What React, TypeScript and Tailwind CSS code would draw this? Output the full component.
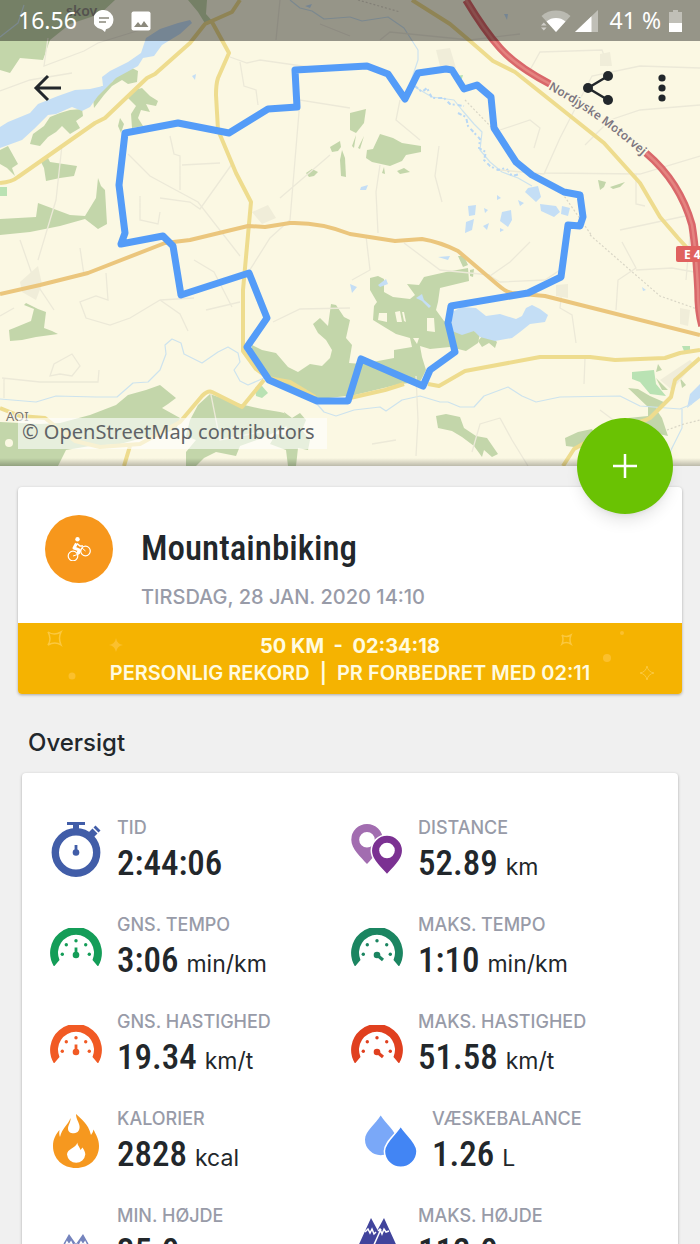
import React from 'react';

type StatProps = {
  icon: React.ReactNode;
  label: string;
  value: string;
  unit?: string;
  indent?: boolean;
};

const MapCanvas = () => (
  <svg
    className="block h-full w-full"
    viewBox="0 0 700 466"
    preserveAspectRatio="xMidYMid slice"
    role="img"
    aria-label="Rutekort"
  >
    <rect width="700" height="466" fill="#fbf8e3" />

    {/* forests */}
    <g fill="#c3d6aa">
      <path d="M0 0H50L50 40L43 60L20 58L10 73L0 70Z" />
      <path d="M45 0H115L100 14L70 24L50 40Z" />
      <path d="M188 0H207L206 14L213 22L206 25L198 12Z" />
      <path d="M93 98L98 88L112 82L116 76L124 72L132 68L138 71L137 82L128 84L122 80L112 86L104 95L94 108Z" />
      <path d="M33 134L44 126L50 117L60 113L70 110L82 109L83 116L76 121L80 128L70 134L62 126L56 132L48 137L40 146L30 144Z" />
      <path d="M128 98L134 90L142 88L150 96L158 101L156 106L146 104L150 112L141 110L138 118L143 126L132 128L131 114L136 106Z" />
      <path d="M120 118L124 124L121 133L118 126Z" />
      <path d="M0 150L8 146L18 164L12 168L15 176L7 168L0 164Z" />
      <path d="M40 160L48 158L50 162L77 166L74 176L60 178L46 181L44 168Z" />
      <path d="M98 178L101 186L105 190L107 224L98 229L85 219L60 226L30 232L0 235V219L36 217L38 203L70 215L85 216L96 198Z" />
      <path d="M330 147L340 141L341 147L338 151L332 152Z" />
      <path d="M342 150L345 158L346 177L341 176L340 160Z" />
      <path d="M306 173L312 169L318 172L314 176L309 177Z" />
      <path d="M350 113L366 109L364 123L356 133L350 130Z" />
      <path d="M380 134L393 138L402 143L421 146L421 152L406 155L402 161L390 166L372 162L366 158L367 150L373 149Z" />
      <path d="M352 146L356 135L354 148ZM358 148L364 136L360 149Z" />
      <path d="M397 171L404 168L410 172L400 174ZM384 167L385 174L382 173Z" />
      <path d="M598 180L606 182L604 187L600 190ZM610 187L625 182L620 187L613 189Z" />
      <path d="M9 330L14 328L31 321L34 309L24 305L26 303L38 309L46 312L44 328L52 331L58 334L36 337L22 340L10 341Z" />
      <path d="M370 278L378 276L384 279L384 292L393 297L410 299L415 295L407 284L419 285L424 277L446 272L468 268L469 281L440 288L438 302L436 310L444 321L470 329L480 334L478 343L466 351L450 347L430 349L420 346L422 357L426 370L420 382L400 384L355 395L320 399L270 381L252 359L252 345L262 350L276 353L288 367L298 372L310 364L322 366L330 358L332 350L326 340L318 333L313 324L320 318L328 326L331 304L336 305L344 317L350 320L346 338L352 345L349 363L362 364L394 358L394 350L412 347L410 338L396 334L386 328L373 320L374 306L377 302L370 290Z" />
      <path d="M458 256L464 256L468 265L463 267ZM470 270L474 269L473 277L470 276Z" />
      <path d="M483 335L492 337L497 342L495 348L489 343L482 347L478 341Z" />
      <path d="M0 422L40 424L60 423L90 415L116 405L128 395L146 390L160 385L176 398L168 404L162 408L180 418L176 430L150 436L120 444L90 446L66 450L58 466H0Z" />
      <path d="M198 405L210 394L224 399L240 404L262 409L280 412L284 413L290 424L280 430L262 438L240 446L236 456L216 452L204 458L196 466H186V452L196 440L186 436L190 420Z" />
      <path d="M284 412L292 418L300 413L306 420L302 430L310 440L308 450L298 448L296 466H288L286 450L270 444L276 434L288 436Z" />
      <path d="M436 416L446 414L460 417L464 428L476 436L487 438L498 454L492 457L484 450L482 457L474 446L462 437L452 431L438 428Z" />
      <path d="M565 438L578 432L592 429L596 436L582 448L566 446Z" />
      <path d="M628 388L638 389L650 396L666 403L656 409L662 418L668 436L640 430L628 418L648 416L648 407Z" />
      <path d="M658 364L662 370L656 372ZM656 378L668 390L662 390ZM680 378L686 385L682 388Z" />
    </g>
    <g fill="#b9e2b3">
      <path d="M632 372L654 370L656 384L666 396L650 394L640 382L632 379Z" />
      <path d="M682 346H690V352L684 351ZM0 187H7V196H0ZM456 76L463 75L461 82Z" />
      <path d="M255 388L262 386L268 393L262 398L256 396Z" />
    </g>
    <g fill="#fbf8e3">
      <path d="M379 313H387V322L378 320ZM395 312L400 311L402 322H397ZM402 312H404L406 322L404 321ZM427 318L434 318L435 332L427 331ZM413 338H419L417 344Z" />
      <circle cx="9" cy="443" r="4" />
    </g>

    {/* lakes, ponds and streams */}
    <g fill="#c4def5">
      <path d="M0 127L8 122L30 113L38 104L58 96L75 90L90 89L103 86L102 77L110 71L128 62L141 53L146 38L160 29L178 23L190 20L192 23L180 34L162 45L154 56L143 58L138 66L116 78L98 96L90 107L82 111L72 107L56 114L48 115L34 129L22 140L0 148Z" />
      <path d="M452 312L462 307L476 308L486 316L500 314L516 319L522 316L526 308L532 305L540 309L548 315L545 322L530 324L520 332L512 338L495 341L480 337L474 331L462 335L452 331Z" />
      <path d="M528 188L538 186L541 197L536 202L525 192ZM540 204L556 206L560 212L554 217L541 211ZM562 206L570 208L568 216L561 214ZM502 212L511 210L512 220L508 227L500 221ZM518 200L524 203L520 206ZM468 206L476 205L475 215L469 216ZM466 222L474 219L472 230L465 233ZM484 208L488 210L485 213ZM497 195L501 198L497 200ZM483 226L489 223L487 230ZM500 228L504 230L500 232Z" />
      <path d="M416 298L422 294L424 300L431 306L429 308L422 301ZM378 285L386 279L388 284L380 287ZM361 187L368 185L366 190H360ZM192 76L196 74L195 80ZM700 384L690 394L687 408L700 398ZM438 257L450 256L448 260Z" />
      <path d="M305 6L312 4L310 8ZM350 284L357 287L352 293ZM504 14L508 14L507 20ZM642 287L646 290L643 291Z" />
    </g>
    <g fill="none" stroke="#cde3ee" strokeWidth="1.2" strokeLinejoin="round">
      <path d="M0 399L36 402L56 396L96 397L117 397L133 383L148 382L160 370L166 354L165 345L172 339L181 343L184 354L202 363L218 352L228 347L238 353L240 362L234 370L240 381L248 385L264 378" />
      <path d="M317 404L324 412L336 416L354 410L380 407L386 411L402 400L420 396L440 402L448 402L460 407L474 407L484 396L508 387L522 396L536 402L560 397L620 396L640 406L680 409L692 404" />
      <path d="M682 409L682 428L671 450L668 466M350 17L362 21L388 17L404 28L418 50L418 60L410 84L420 90L432 97L454 100L462 110L474 124L482 132L480 150L490 162L502 172L518 178L532 186" />
      <path d="M290 0L300 8L312 11L324 19L350 17M0 37L18 23L24 5" />
    </g>
    <path
      d="M415 86L422 92L427 88L432 98L444 98L450 104L464 106M458 113L466 117L468 126L480 139L479 148L486 152L484 160L490 166L498 170L506 168L512 176L520 174"
      fill="none"
      stroke="#b9d8f5"
      strokeWidth="2"
      strokeDasharray="4 2 2 3"
    />

    {/* minor roads */}
    <g fill="none" stroke="#ece9d8" strokeWidth="1.3">
      <path d="M0 91L30 80L72 73M48 38L44 66L84 51L98 43L140 30M230 57L247 63L260 60L309 67M240 62L244 86L256 90L258 105M128 154L150 176L172 188L198 202L240 256M170 136L174 154L180 156L180 190M182 165L220 163M246 276L270 238L290 220L300 100L350 108M280 198L330 155M380 165L376 192L378 233M400 100L396 120L420 140M439 146L435 176L442 202M62 145L56 200L38 260" />
      <path d="M500 170L544 174L560 138L592 76L640 66L700 68M545 173L640 174L700 156M585 145L610 120L640 110L700 105M608 66L602 50L540 52L530 70M636 174L636 204L645 206M620 230L690 215M380 40L390 32L470 40L520 34M500 130L530 120L540 128L534 148M160 198L190 202L200 209L232 164M140 196L140 220L158 224L160 212" />
      <path d="M280 0L276 40M320 24L350 36M20 240L34 280L54 310M80 248L84 275M106 273L108 300L96 296L80 302L86 318L110 325L130 318L160 300L180 314L188 331M160 300L194 298M206 310L240 302M194 260L214 272L232 307M273 322L300 309L350 308M0 316L14 308M50 376L54 364L72 354L80 366L72 376L60 374ZM2 378L40 382L98 382L99 370M4 378V398" />
      <path d="M366 236L370 270L352 280M404 243L440 270L490 275M530 242L510 262L490 276L500 282L545 280L560 270M562 290L560 308L572 315L576 343M622 242L636 268L618 280L616 310M636 270L672 268L700 273M585 358L584 384M500 418L480 424L472 452M500 418L512 440L528 466M416 376L418 420L416 456M372 444L396 440M600 410L640 440M690 235L686 280M210 390L220 440L270 430" />
    </g>
    <path
      d="M590 235L630 270L660 296L700 310M667 430L684 424L700 420M358 0L400 12M465 100L494 130M560 190L592 236"
      fill="none"
      stroke="#d9d6c6"
      strokeWidth="1.2"
      strokeDasharray="2 2"
    />
    <g fill="#f0edd9">
      <path d="M20 282L38 266L42 284L36 300L22 292ZM252 212L268 205L276 218L262 224ZM436 50L450 48L456 68L440 66ZM600 54L610 52L612 66L600 66ZM556 285L568 284L568 298L556 296ZM680 308L690 310L688 326L680 324ZM660 380L690 360L694 364L672 390Z" />
    </g>

    {/* secondary roads */}
    <g fill="none" stroke="#eedc8e" strokeWidth="4" strokeLinejoin="round">
      <path d="M0 183Q12 182 18 177L95 123L105 118L147 78L155 74L190 43L205 24L232 12L240 0" />
      <path d="M212 22L229 53L218 78Q216 84 216 95L218 130L236 173L251 202L248 235L243 290V351L256 369L268 378L290 382L315 397" />
      <path d="M412 0L450 24L470 41L493 61L515 72L604 143L640 183L660 217L678 238L690 251" />
      <path d="M350 398L385 390L404 384M428 384L439 386L465 371L540 357H590L615 360L665 358L680 353L700 350" />
      <path d="M700 358L675 380L671 397L650 418Q640 424 618 423M590 440L574 449L563 466" />
      <path d="M0 408L20 416L45 418L60 430L75 441L100 447L140 444L180 422L202 396Q208 390 212 392L242 407L264 380M130 446L124 466" />
    </g>
    <g fill="none" strokeLinejoin="round">
      <path
        d="M0 294L40 285L88 273L165 243L190 240L248 226L265 227L290 223Q320 222 350 234L395 241L422 239Q440 242 458 251L498 285Q506 292 512 293L545 296L700 335"
        stroke="#ebc67d"
        strokeWidth="4"
      />
      <path d="M466 0Q484 30 500 48T550 84M646 153Q680 182 692 225Q696 250 698 290Q698 312 702 326" stroke="#d9676a" strokeWidth="7.5" />
      <path d="M466 0Q484 30 500 48T550 84M646 153Q680 182 692 225Q696 250 698 290Q698 312 702 326" stroke="#e48480" strokeWidth="2.5" />
    </g>

    {/* map labels */}
    <path id="motorway" d="M548 89Q602 118 656 168" fill="none" />
    <text
      className="font-['Noto_Sans','Open_Sans',sans-serif] text-[12px] font-semibold"
      fill="#7d7680"
      stroke="#fbf8e3"
      strokeWidth="3"
      paintOrder="stroke"
    >
      <textPath href="#motorway">Nordjyske Motorvej</textPath>
    </text>
    <rect x="676" y="246" width="30" height="16" rx="2" fill="#e0615f" />
    <g className="font-['Noto_Sans','Open_Sans',sans-serif]">
      <text x="684" y="259" className="text-[12px] font-bold" fill="#fff">
        E 45
      </text>
      <text x="66" y="16" className="text-[14px] font-semibold" fill="#8d8984">
        skov
      </text>
      <text x="6" y="421" className="text-[13px]" fill="#77736f" stroke="#fbf8e3" strokeWidth="2" paintOrder="stroke">
        AOI
      </text>
    </g>

    {/* recorded track */}
    <path
      d="M125 133L178 123L229 133L268 109L297 107L295 70L367 66L388 74L405 99L418 73L446 69L452 70L464 89L477 85L491 97L494 128L516 162L532 175L564 192L580 195L583 217L580 226L568 225L561 277L528 293L451 306L448 323L455 352L430 370L423 386L361 359L348 401H317L269 380L247 347L267 318L249 273L181 295L173 246L163 236L121 244L125 233L119 185Z"
      fill="none"
      stroke="#549cf8"
      strokeWidth="7"
      strokeLinejoin="round"
    />
  </svg>
);

const StatusBar = () => (
  <div className="flex h-[41px] items-center justify-between bg-black/40 px-[18px] font-['Noto_Sans','Open_Sans',sans-serif] text-[23px] text-white">
    <div className="flex items-center gap-[17px]">
      <span>16.56</span>
      <svg className="h-[22px] w-5" viewBox="0 0 20 22" aria-hidden="true">
        <path d="M10 0a9.8 9.8 0 0 1 2 19.3L11 22l-3-2.5A9.8 9.8 0 0 1 10 0z" fill="#fff" />
        <path d="M5 8h10M5 12h7" stroke="#8b897c" strokeWidth="1.6" />
      </svg>
      <svg className="h-5 w-5" viewBox="0 0 20 20" aria-hidden="true">
        <rect x="0.5" y="0.5" width="19" height="19" rx="2" fill="#fff" />
        <path d="M3 16l4-5 3 3.5 3-4.5 4.5 6z" fill="#8b897c" />
      </svg>
    </div>
    <div className="flex items-center gap-1">
      <svg className="h-[22px] w-[30px]" viewBox="0 0 30 22" aria-hidden="true">
        <path d="M0.5 6a22 22 0 0 1 29 0L15 22z" fill="#fff" opacity="0.35" />
        <path d="M5.5 11.5a15 15 0 0 1 19 0L15 22z" fill="#fff" />
        <path d="M0 15.5l2.8-3 2.8 3zM0 17.5l2.8 3 2.8-3z" fill="#cfcec8" />
      </svg>
      <svg className="h-[22px] w-[23px]" viewBox="0 0 23 22" aria-hidden="true">
        <path d="M23 0v22H0z" fill="#fff" opacity="0.4" />
        <path d="M16.5 6.2V22H0z" fill="#fff" />
      </svg>
      <span className="pl-2">41 %</span>
      <svg className="ml-1 h-[22px] w-[13px]" viewBox="0 0 13 22" aria-hidden="true">
        <path d="M4 0h5v2h4v20H0V2h4z" fill="#fff" opacity="0.4" />
        <path d="M0 13h13v9H0z" fill="#fff" />
      </svg>
    </div>
  </div>
);

const AppBar = () => (
  <div className="flex items-center justify-between pt-[23px] pr-[22px] pl-[33px] text-[#22272b]">
    <button type="button" aria-label="Tilbage" className="flex h-12 w-8 items-center">
      <svg className="h-7 w-[30px]" viewBox="0 0 30 28" fill="none" stroke="currentColor" strokeWidth="3">
        <path d="M28 14H4M15 2L3 14l12 12" />
      </svg>
    </button>
    <div className="flex items-center gap-8">
      <button type="button" aria-label="Del" className="flex h-12 w-8 items-center">
        <svg className="h-[34px] w-8" viewBox="0 0 32 34" fill="currentColor">
          <path d="M26 5L6 17l20 12" fill="none" stroke="currentColor" strokeWidth="2.5" />
          <circle cx="26" cy="5" r="5" />
          <circle cx="6" cy="17" r="5" />
          <circle cx="26" cy="29" r="5" />
        </svg>
      </button>
      <button type="button" aria-label="Flere valg" className="flex h-12 w-8 items-center justify-center">
        <svg className="h-7 w-2" viewBox="0 0 8 28" fill="currentColor">
          <circle cx="4" cy="4" r="3.6" />
          <circle cx="4" cy="14" r="3.6" />
          <circle cx="4" cy="24" r="3.6" />
        </svg>
      </button>
    </div>
  </div>
);

const BikeIcon = () => (
  <svg className="h-6 w-6" viewBox="0 0 24 24" fill="none" stroke="#fff" aria-hidden="true">
    <circle cx="6" cy="19" r="4.8" strokeWidth="1.2" />
    <circle cx="18.5" cy="14" r="4.8" strokeWidth="1.2" />
    <circle cx="10.5" cy="2.2" r="2.2" fill="#fff" stroke="none" />
    <path d="M9.5 6.5L7 11l5 1.8-1 4" strokeWidth="3" strokeLinejoin="round" />
    <path d="M10 6.5l3 2.5h3" strokeWidth="1.6" />
    <path d="M6 19l6-2 3-6 3.5 3" strokeWidth="1" />
  </svg>
);

const StopwatchIcon = () => (
  <svg className="h-14 w-[52px]" viewBox="0 0 52 56" fill="#415da8" aria-hidden="true">
    <circle cx="26" cy="30.5" r="20.7" fill="none" stroke="#415da8" strokeWidth="7.4" />
    <path d="M17 0h18v3h-6v5h-6V3h-6z" />
    <path d="M38.5 10.5l4-4 5 5-4 4z" />
    <path d="M43.5 5.5l2-2 5 5-2 2z" />
    <path d="M24.6 23h2.8v5h-2.8z" />
    <circle cx="26" cy="30.5" r="3.3" />
  </svg>
);

const PinsIcon = () => (
  <svg className="h-14 w-[52px]" viewBox="0 0 52 56" fillRule="evenodd" aria-hidden="true">
    <path
      d="M16 2a15.7 15.7 0 0 1 15.7 15.7C31.7 27 22 35 16 42 10 35 .3 27 .3 17.7A15.7 15.7 0 0 1 16 2zm0 8a7.8 7.8 0 1 0 0 15.6A7.8 7.8 0 0 0 16 10z"
      fill="#a26db0"
    />
    <path
      d="M36 13a15.7 15.7 0 0 1 15.7 15.7C51.7 38 42 46 36 53 30 46 20.3 38 20.3 28.7A15.7 15.7 0 0 1 36 13z"
      fill="#7b3192"
      stroke="#fff"
      strokeWidth="1.5"
    />
    <circle cx="36" cy="28.5" r="7.8" fill="#fff" />
  </svg>
);

const GaugeIcon = ({ color, max = false }: { color: string; max?: boolean }) => (
  <svg className="h-[38px] w-[52px]" viewBox="0 0 52 38" fill={color} aria-hidden="true">
    <path d="M4 38.5A25.9 25.9 0 1 1 48 38.5L42.5 32A18 18 0 1 0 9.5 32Z" />
    <circle cx="12.3" cy="26.3" r="1.7" />
    <circle cx="16.3" cy="16.7" r="1.7" />
    <circle cx="26" cy="12.7" r="1.7" />
    <circle cx="35.7" cy="16.7" r="1.7" />
    <circle cx="39.3" cy="26.3" r="1.7" />
    <circle cx="26" cy="27" r="3.3" />
    {max ? (
      <path d="M26 27L32 32" stroke={color} strokeWidth="3.2" />
    ) : (
      <path d="M26 27V19.5" stroke={color} strokeWidth="2.8" />
    )}
  </svg>
);

const FlameIcon = () => (
  <svg className="h-14 w-[52px]" viewBox="0 0 52 56" aria-hidden="true">
    <path
      d="M26 1C31 6 38 10 41 22C42 20.500 43 19 43.500 16.500C46 22 49 26 49 33C49 46 39 55 26 55S3 46 3 33C3 26 6 21 9.500 17C9 20 9.300 22 10 24C12 15 18 12 20.500 5C21 9 18 12 18 15.500C18 19 21 20.500 24 20.300C28 20 30 17 29.500 13C29 9 26 6 26 1z"
      fill="#f6981f"
    />
    <path d="M27.5 29.5C27 32 30 34 30.5 37L32.5 34.5C34 37 35.3 39 35.3 41.5A9.2 9.2 0 0 1 17 41.5C17 36 26 35 27.5 29.5z" fill="#fff" />
  </svg>
);

const DropsIcon = () => (
  <svg className="h-[52px] w-[52px]" viewBox="0 0 52 52" aria-hidden="true">
    <path d="M15.7.5C20 8 31.4 16 31.4 24.5a15.7 15.7 0 0 1-31.4 0C0 16 11.4 8 15.7.5z" fill="#7aa8f8" />
    <path d="M35.7 11C40 19 52 27 52 36a16.3 16.3 0 0 1-32.6 0C19.4 27 31.4 19 35.7 11z" fill="#4285f4" stroke="#fff" strokeWidth="1.5" />
  </svg>
);

const PeaksIcon = ({ color, low = false }: { color: string; low?: boolean }) => (
  <svg className="h-14 w-[52px]" viewBox="0 0 52 56" aria-hidden="true">
    {low ? (
      <>
        <path d="M19 24L26 34L33 24L50 54H2z" fill={color} />
        <path d="M13 34l2 2 2-4 2 3 2-3 2 4 2-2M27 34l2 2 2-4 2 3 2-3 2 4 2-2" fill="none" stroke="#fff" strokeWidth="1.5" />
      </>
    ) : (
      <>
        <path d="M20 8L26.5 20L33 8L54 54H-1z" fill={color} />
        <path d="M14 22l3-3 2 4 2-4 2 5 2-2M27 21l2-2 2 5 2-5 2 3 3-1M22 37l8-18" fill="none" stroke="#fff" strokeWidth="1.5" />
      </>
    )}
  </svg>
);

const Stat = ({ icon, label, value, unit, indent }: StatProps) => (
  <div className={indent ? 'flex items-center gap-[15px] pl-3.5' : 'flex items-center gap-[15px]'}>
    {icon}
    <dl className="whitespace-nowrap">
      <dt className="text-lg leading-7 font-medium text-[#989ba8]">{label}</dt>
      <dd className="flex h-11 items-baseline gap-2 text-[23px] leading-[44px]">
        <span className="font-['Roboto_Condensed',Roboto,sans-serif] text-[35px] leading-[44px] font-medium">
          {value}
        </span>
        {unit && <span>{unit}</span>}
      </dd>
    </dl>
  </div>
);

const Confetti = () => (
  <svg
    className="absolute inset-0 h-full w-full"
    viewBox="0 0 664 71"
    preserveAspectRatio="none"
    fill="#fbc02d"
    aria-hidden="true"
  >
    <path
      d="M30 9q6 4 13 0q-3 6 0 13q-6-4-13 0q4-6 0-13zM544 12q4 3 9 0q-2 5 0 9q-5-3-9 0q2-5 0-9z"
      fill="none"
      stroke="#fbc83f"
      strokeWidth="1.5"
    />
    <path d="M98 15q1 6 7 7q-6 1-7 7q-1-6-7-7q6-1 7-7z" />
    <path d="M629 43q1 6 7 7q-6 1-7 7q-1-6-7-7q6-1 7-7z" fill="none" stroke="#fbc83f" />
    <circle cx="54" cy="53" r="3.5" />
    <circle cx="589" cy="35" r="4" />
    <circle cx="604" cy="10" r="2" />
  </svg>
);

export default function App() {
  return (
    <div className="h-screen overflow-hidden bg-[#f0f0f0] font-['Inter','Liberation_Sans',sans-serif] text-[#22272b]">
      <header className="relative h-[466px]">
        <MapCanvas />
        <div className="absolute inset-x-0 bottom-0 h-2 bg-linear-to-t from-black/25 to-transparent" />
        <div className="absolute inset-x-0 top-0">
          <StatusBar />
          <AppBar />
        </div>
        <a
          href="#copyright"
          className="absolute bottom-[17px] left-[18px] bg-white/60 pr-3 pb-1 pl-1 font-['Noto_Sans','Open_Sans',sans-serif] text-xl leading-[27px] text-[#5f6366]"
        >
          © OpenStreetMap contributors
        </a>
        <button
          type="button"
          aria-label="Tilføj"
          className="absolute right-[27px] -bottom-12 flex h-24 w-24 items-center justify-center rounded-full bg-[#6ac203] shadow-lg"
        >
          <svg className="h-6 w-6" viewBox="0 0 24 24" stroke="#fff" strokeWidth="2.5">
            <path d="M12 0v24M0 12h24" />
          </svg>
        </button>
      </header>

      <main>
        <section className="mx-[18px] mt-[21px] overflow-hidden rounded-sm bg-white shadow-[0_1px_3px_rgba(0,0,0,0.3)]">
          <div className="flex gap-7 px-[27px] pt-7 pb-3">
            <div className="flex h-[68px] w-[68px] shrink-0 items-center justify-center rounded-full bg-[#f7971c]">
              <BikeIcon />
            </div>
            <div>
              <h1 className="font-['Roboto_Condensed',Roboto,sans-serif] text-[35px] leading-[68px] font-medium">
                Mountainbiking
              </h1>
              <p className="text-xl leading-7 font-medium text-[#989ba8]">TIRSDAG, 28 JAN. 2020 14:10</p>
            </div>
          </div>
          <div className="relative bg-[#f5b301] pt-2.5 pb-[7px] text-center text-xl leading-[27px] text-[#fffbe0]">
            <Confetti />
            <p className="relative font-bold whitespace-pre">50 KM  -  02:34:18</p>
            <p className="relative font-semibold whitespace-pre">PERSONLIG REKORD  |  PR FORBEDRET MED 02:11</p>
          </div>
        </section>

        <h2 className="mt-[35px] mb-4 px-7 text-2xl leading-7 font-medium">Oversigt</h2>

        <section className="mx-[22px] grid grid-cols-2 gap-y-[25px] rounded-sm bg-white pt-[41px] pr-[26px] pb-10 pl-7 shadow-[0_1px_3px_rgba(0,0,0,0.3)]">
          <Stat icon={<StopwatchIcon />} label="TID" value="2:44:06" />
          <Stat icon={<PinsIcon />} label="DISTANCE" value="52.89" unit="km" />
          <Stat icon={<GaugeIcon color="#149d58" />} label="GNS. TEMPO" value="3:06" unit="min/km" />
          <Stat icon={<GaugeIcon color="#1b8561" max />} label="MAKS. TEMPO" value="1:10" unit="min/km" />
          <Stat icon={<GaugeIcon color="#f15a24" />} label="GNS. HASTIGHED" value="19.34" unit="km/t" />
          <Stat icon={<GaugeIcon color="#e0401f" max />} label="MAKS. HASTIGHED" value="51.58" unit="km/t" />
          <Stat icon={<FlameIcon />} label="KALORIER" value="2828" unit="kcal" />
          <Stat icon={<DropsIcon />} label="VÆSKEBALANCE" value="1.26" unit="L" indent />
          <Stat icon={<PeaksIcon color="#7584bd" low />} label="MIN. HØJDE" value="35.0" />
          <Stat icon={<PeaksIcon color="#41449c" />} label="MAKS. HØJDE" value="112.0" />
        </section>
      </main>
    </div>
  );
}
